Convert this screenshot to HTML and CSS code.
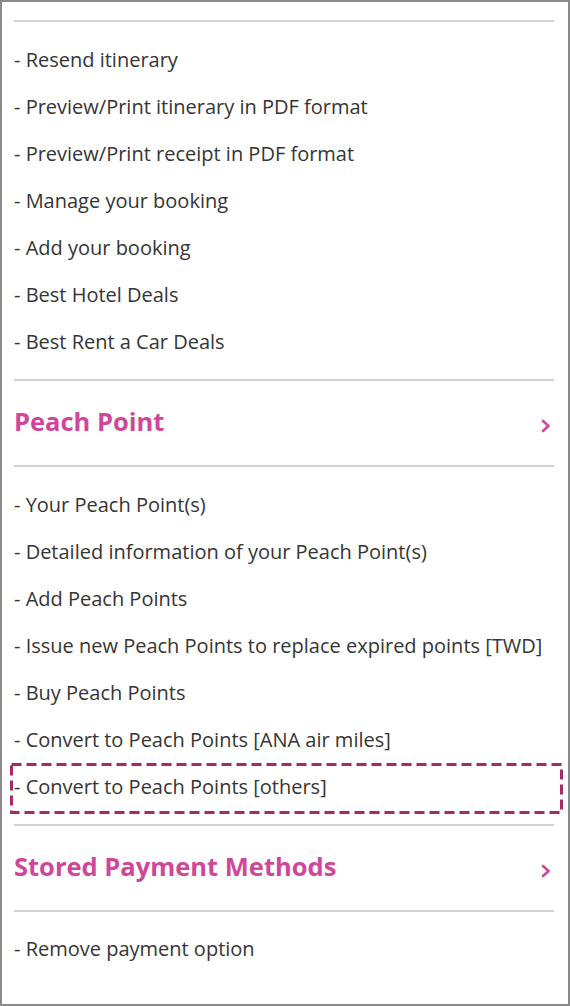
FILE: index.html
```html
<!DOCTYPE html>
<html lang="en">
<head>
<meta charset="utf-8">
<title>Menu</title>
<link rel="stylesheet" href="styles.css">
</head>
<body>
<div class="frame">
  <div class="panel">
    <ul class="links">
      <li>- Resend itinerary</li>
      <li>- Preview/Print itinerary in PDF format</li>
      <li>- Preview/Print receipt in PDF format</li>
      <li>- Manage your booking</li>
      <li>- Add your booking</li>
      <li>- Best Hotel Deals</li>
      <li>- Best Rent a Car Deals</li>
    </ul>
    <div class="heading">
      <span class="title">Peach Point</span>
      <svg class="chev" width="10" height="14" viewBox="0 0 10 14"><polyline points="2,2 7.5,7 2,12" fill="none" stroke="#d0479a" stroke-width="2.6" stroke-linecap="round" stroke-linejoin="round"/></svg>
    </div>
    <ul class="links">
      <li>- Your Peach Point(s)</li>
      <li>- Detailed information of your Peach Point(s)</li>
      <li>- Add Peach Points</li>
      <li>- Issue new Peach Points to replace expired points [TWD]</li>
      <li>- Buy Peach Points</li>
      <li>- Convert to Peach Points [ANA air miles]</li>
      <li class="marked">- Convert to Peach Points [others]
        <svg class="dash" width="553" height="51" viewBox="0 0 553 51"><rect x="1.5" y="1.5" width="550" height="48" fill="none" stroke="#a82a62" stroke-width="3" stroke-dasharray="10 5"/></svg>
      </li>
    </ul>
    <div class="heading">
      <span class="title">Stored Payment Methods</span>
      <svg class="chev" width="10" height="14" viewBox="0 0 10 14"><polyline points="2,2 7.5,7 2,12" fill="none" stroke="#d0479a" stroke-width="2.6" stroke-linecap="round" stroke-linejoin="round"/></svg>
    </div>
    <ul class="links last">
      <li>- Remove payment option</li>
    </ul>
  </div>
</div>
</body>
</html>
```
FILE: styles.css
```css
html, body {
  margin: 0;
  padding: 0;
  background: #fff;
}
.frame {
  width: 570px;
  height: 1006px;
  box-sizing: border-box;
  border: 2px solid #8a8a8a;
  background: #fff;
  overflow: hidden;
  padding: 18px 14px 0 12px;
  font-family: "Open Sans", "Noto Sans", sans-serif;
}
.panel {
  border-top: 2px solid #d2d2d2;
}
.links {
  list-style: none;
  margin: 0;
  padding: 14px 0 14px 0;
  border-bottom: 2px solid #d2d2d2;
}
.links.last {
  border-bottom: none;
  padding-top: 13px;
}
.links li {
  height: 47px;
  line-height: 47px;
  font-size: 20px;
  color: #353535;
  white-space: nowrap;
  position: relative;
}
.dash {
  position: absolute;
  left: -4px;
  top: 0;
  display: block;
}
.heading {
  height: 84px;
  display: flex;
  align-items: center;
  justify-content: space-between;
  border-bottom: 2px solid #d2d2d2;
  color: #d0479a;
  font-weight: 700;
  font-size: 25.5px;
  padding-right: 3px;
}
.title {
  margin-top: -4px;
}
.chev {
  display: block;
  margin-top: 6px;
}
```
